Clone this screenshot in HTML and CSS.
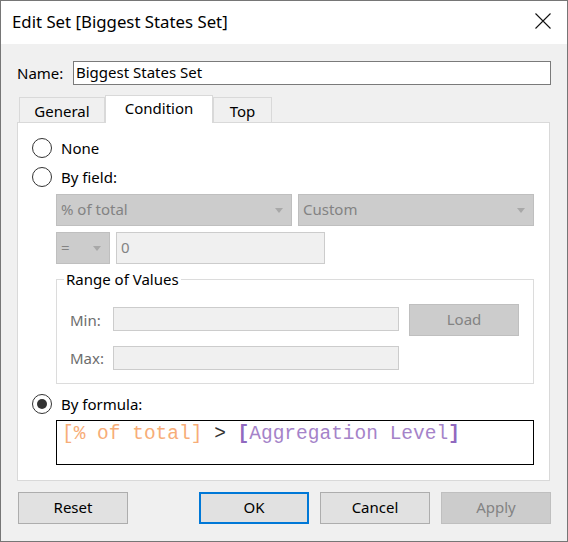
FILE: index.html
```html
<!DOCTYPE html>
<html>
<head>
<meta charset="utf-8">
<link rel="stylesheet" href="styles.css">
</head>
<body>
<div class="window">
  <div class="titlebar">
    <span class="title">Edit Set [Biggest States Set]</span>
    <svg class="close" width="16" height="16" viewBox="0 0 16 16"><path d="M0.5 0.5 L15.5 15.5 M15.5 0.5 L0.5 15.5" stroke="#111" stroke-width="1.1" fill="none"/></svg>
  </div>
  <div class="body">
    <div class="name-row">
      <span class="name-label">Name:</span>
      <div class="name-input">Biggest States Set</div>
    </div>
    <div class="tabs">
      <div class="tab tab-general">General</div>
      <div class="tab tab-active">Condition</div>
      <div class="tab tab-top">Top</div>
    </div>
    <div class="panel">
      <div class="radio-row row-none"><span class="radio"></span><span>None</span></div>
      <div class="radio-row row-field"><span class="radio"></span><span>By field:</span></div>
      <div class="indent">
        <div class="combo-row">
          <div class="combo wide">% of total<span class="arrow"></span></div>
          <div class="combo wide">Custom<span class="arrow"></span></div>
        </div>
        <div class="combo-row row2">
          <div class="combo small">=<span class="arrow"></span></div>
          <div class="field value">0</div>
        </div>
        <fieldset class="group">
          <legend>Range of Values</legend>
          <div class="range-row">
            <span class="range-label">Min:</span>
            <div class="field range-input"></div>
            <div class="btn btn-disabled load">Load</div>
          </div>
          <div class="range-row max-row">
            <span class="range-label">Max:</span>
            <div class="field range-input"></div>
          </div>
        </fieldset>
      </div>
      <div class="radio-row row-formula"><span class="radio checked"></span><span>By formula:</span></div>
      <div class="indent">
        <div class="formula"><span class="f-field">[% of total]</span> <span class="f-op">&gt;</span> <span class="f-param"><b>[</b>Aggregation Level<b>]</b></span></div>
      </div>
    </div>
    <div class="buttons">
      <div class="btn reset">Reset</div>
      <div class="btn-group">
        <div class="btn btn-default">OK</div>
        <div class="btn">Cancel</div>
        <div class="btn btn-disabled">Apply</div>
      </div>
    </div>
  </div>
</div>
</body>
</html>
```
FILE: styles.css
```css
* { box-sizing: border-box; }
html, body { margin: 0; padding: 0; }
body {
  font-family: "Noto Sans", "Open Sans", sans-serif;
  font-size: 15px;
  color: #000;
  background: #f0f0f0;
}
.window {
  width: 568px;
  height: 542px;
  border: 1px solid #767676;
  background: #f0f0f0;
  display: flex;
  flex-direction: column;
}
.titlebar {
  height: 43px;
  background: #fff;
  display: flex;
  align-items: center;
  padding-left: 11px;
  padding-right: 16px;
  justify-content: space-between;
}
.title { font-size: 16.8px; margin-top: -2px; }
.close { margin-top: -4px; }
.body {
  padding: 17px 16px 0 16px;
}
.name-row {
  display: flex;
  align-items: center;
  height: 24px;
}
.name-label { width: 56px; }
.name-input {
  width: 478px;
  height: 24px;
  border: 1px solid #7a7a7a;
  background: #fff;
  padding-left: 2px;
  line-height: 21px;
}
.tabs {
  display: flex;
  align-items: flex-end;
  margin-top: 10px;
  padding-left: 2px;
  height: 27px;
  position: relative;
  z-index: 1;
}
.tab {
  height: 25px;
  border: 1px solid #d9d9d9;
  border-bottom: none;
  background: #f0f0f0;
  text-align: center;
  line-height: 24px;
  padding-top: 1px;
}
.tab-general { width: 86px; }
.tab-active {
  width: 108px;
  height: 28px;
  background: #fff;
  line-height: 24px;
  padding-top: 0;
  margin-bottom: -1px;
}
.tab-top { width: 59px; }
.panel {
  width: 533px;
  height: 359px;
  background: #fff;
  border: 1px solid #d9d9d9;
}
.radio-row {
  display: flex;
  align-items: center;
  height: 20px;
  padding-left: 14px;
}
.row-none { margin-top: 15px; }
.row-field { margin-top: 9px; }
.row-formula { margin-top: 10px; }
.radio {
  width: 20px;
  height: 20px;
  border: 1px solid #333;
  border-radius: 50%;
  background: #fff;
  margin-right: 9px;
  display: flex;
  align-items: center;
  justify-content: center;
}
.radio.checked::after {
  content: "";
  width: 10px;
  height: 10px;
  border-radius: 50%;
  background: #333;
}
.indent { padding-left: 38px; }
.combo-row {
  display: flex;
  gap: 6px;
  margin-top: 7px;
  height: 32px;
}
.row2 { margin-top: 6px; }
.combo {
  height: 32px;
  background: #cccccc;
  border: 1px solid #bfbfbf;
  color: #838383;
  padding-left: 4px;
  line-height: 29px;
  position: relative;
}
.combo.wide { width: 236px; }
.combo.small { width: 54px; }
.arrow {
  position: absolute;
  right: 8px;
  top: 13px;
  width: 0;
  height: 0;
  border-left: 4px solid transparent;
  border-right: 4px solid transparent;
  border-top: 5px solid #a8a8a8;
}
.field {
  background: #f0f0f0;
  border: 1px solid #cccccc;
  color: #838383;
}
.value {
  width: 209px;
  height: 32px;
  padding-left: 4px;
  line-height: 29px;
}
.group {
  margin: 4px 0 0 0;
  width: 478px;
  border: 1px solid #dcdcdc;
  padding: 14px 0 13px 13px;
  min-width: 0;
}
.group legend {
  padding: 0 2px;
  margin-left: -6px;
  line-height: 22px;
}
.range-row {
  display: flex;
  align-items: flex-start;
  height: 32px;
}
.range-label { width: 43px; color: #6d6d6d; line-height: 32px; }
.range-input {
  width: 286px;
  height: 24px;
  margin-top: 3px;
}
.max-row { margin-top: 10px; height: 24px; }
.max-row .range-input { margin-top: 0; }
.max-row .range-label { line-height: 24px; }
.load { margin-left: 10px; }
.formula {
  margin-top: 6px;
  width: 478px;
  height: 45px;
  border: 1px solid #000;
  background: #fff;
  font-family: "Liberation Mono", "Courier New", monospace;
  font-size: 19.5px;
  line-height: 22px;
  padding: 2px 0 0 5px;
  white-space: pre;
}
.f-field { color: #f7ad78; }
.f-op { color: #333; }
.f-param { color: #a583c9; }
.f-param b { color: #9069bf; }
.buttons {
  display: flex;
  justify-content: space-between;
  margin-top: 11px;
  padding: 0 0 0 1px;
}
.btn-group { display: flex; gap: 11px; }
.btn {
  width: 110px;
  height: 32px;
  background: #e1e1e1;
  border: 1px solid #adadad;
  text-align: center;
  line-height: 29px;
}
.btn-default {
  border: 2px solid #0078d7;
  line-height: 27px;
}
.btn-disabled {
  background: #cccccc;
  border-color: #bfbfbf;
  color: #838383;
}
```
